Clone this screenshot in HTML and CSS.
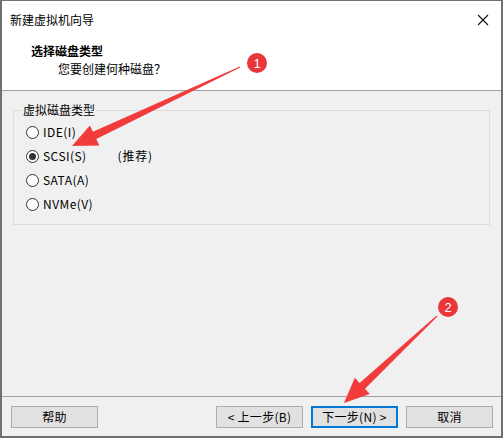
FILE: index.html
```html
<!DOCTYPE html>
<html lang="zh-CN">
<head>
<meta charset="utf-8">
<title>新建虚拟机向导</title>
<link rel="stylesheet" href="styles.css">
</head>
<body>
<div class="window">
  <div class="titlebar">
    <span class="title">新建虚拟机向导</span>
    <svg class="close" width="12" height="12" viewBox="0 0 12 12"><path d="M1 1L11 11M11 1L1 11" stroke="#111" stroke-width="1.1" fill="none"/></svg>
  </div>
  <div class="header">
    <div class="h-title">选择磁盘类型</div>
    <div class="h-sub">您要创建何种磁盘？</div>
  </div>
  <div class="content">
    <fieldset class="group">
      <legend>虚拟磁盘类型</legend>
      <div class="row"><span class="radio"></span><span class="label">IDE(I)</span></div>
      <div class="row"><span class="radio checked"></span><span class="label">SCSI(S)</span><span class="hint">(推荐)</span></div>
      <div class="row"><span class="radio"></span><span class="label">SATA(A)</span></div>
      <div class="row"><span class="radio"></span><span class="label">NVMe(V)</span></div>
    </fieldset>
  </div>
  <div class="footer">
    <button class="btn">帮助</button>
    <span class="spacer"></span>
    <button class="btn">&lt; 上一步(B)</button>
    <button class="btn primary">下一步(N) &gt;</button>
    <button class="btn">取消</button>
  </div>
  <svg class="overlay" width="503" height="438" viewBox="0 0 503 438">
    <polygon fill="#f23b3b" points="239.8,66.5 92.9,131.8 89.9,125.4 72,146 99.3,145.4 96.3,139 240.2,67.5"/>
    <polygon fill="#f23b3b" points="436.6,315.6 359.6,383 354.8,377.8 344,403 369.8,394 365,388.8 437.4,316.4"/>
    <circle cx="257" cy="63" r="10" fill="#e8363b"/>
    <circle cx="448" cy="307" r="10" fill="#e8363b"/>
    <text x="257" y="67.5" class="num">1</text>
    <text x="448" y="311.5" class="num">2</text>
  </svg>
</div>
</body>
</html>
```
FILE: styles.css
```css
* { box-sizing: border-box; }
html, body { margin: 0; padding: 0; background: #fff; }
body {
  font-family: "Noto Sans CJK SC", "Noto Sans", sans-serif;
  font-size: 12px;
  color: #000;
}
.window {
  position: relative;
  width: 503px;
  height: 438px;
  border-style: solid;
  border-color: #707070;
  border-width: 1px 2px 2px 2px;
  display: flex;
  flex-direction: column;
  background: #f0f0f0;
  overflow: hidden;
}
.titlebar {
  height: 37px;
  background: #fff;
  display: flex;
  align-items: center;
  justify-content: space-between;
  padding: 0 12px 0 8px;
}
.title { font-size: 12px; line-height: 16px; margin-top: 1px; }
.close { display: block; margin-top: 1px; }
.header {
  height: 53px;
  background: #fff;
  border-bottom: 1px solid #a0a0a0;
  padding-top: 4px;
}
.h-title {
  font-weight: 700;
  padding-left: 29px;
  line-height: 18px;
}
.h-sub {
  padding-left: 56px;
  line-height: 18px;
}
.content {
  flex: 1;
  border-bottom: 1px solid #a0a0a0;
  padding-top: 11px;
}
.group {
  margin: 0 11px;
  padding: 2px 12px 8px 12px;
  border: 1px solid #dcdcdc;
  min-width: 0;
}
.group legend {
  padding: 0 1px;
  margin-left: -4px;
  line-height: 16px;
  font-size: 12px;
}
.row {
  height: 24px;
  display: flex;
  align-items: center;
}
.radio {
  width: 13px;
  height: 13px;
  border: 1px solid #333;
  border-radius: 50%;
  background: #fff;
  display: flex;
  align-items: center;
  justify-content: center;
  flex: none;
}
.radio.checked::after {
  content: "";
  width: 7px;
  height: 7px;
  border-radius: 50%;
  background: #333;
}
.label { margin-left: 4px; line-height: 16px; letter-spacing: 0.45px; }
.hint { margin-left: 31px; line-height: 16px; letter-spacing: 0.8px; }
.footer {
  height: 39px;
  display: flex;
  align-items: flex-start;
  gap: 8px;
  padding: 9px 8px 0 9px;
}
.spacer { flex: 1; }
.btn {
  width: 87px;
  height: 22px;
  border: 1px solid #adadad;
  background: #e1e1e1;
  font-family: inherit;
  font-size: 12px;
  color: #000;
  padding: 0;
  line-height: 18px;
  letter-spacing: 0.3px;
}
.btn.primary { border: 2px solid #0078d7; }
.overlay {
  position: absolute;
  left: -2px;
  top: -1px;
  pointer-events: none;
}
.num {
  fill: #fff;
  font-family: "Liberation Sans", Arial, sans-serif;
  font-size: 13px;
  text-anchor: middle;
}
```
